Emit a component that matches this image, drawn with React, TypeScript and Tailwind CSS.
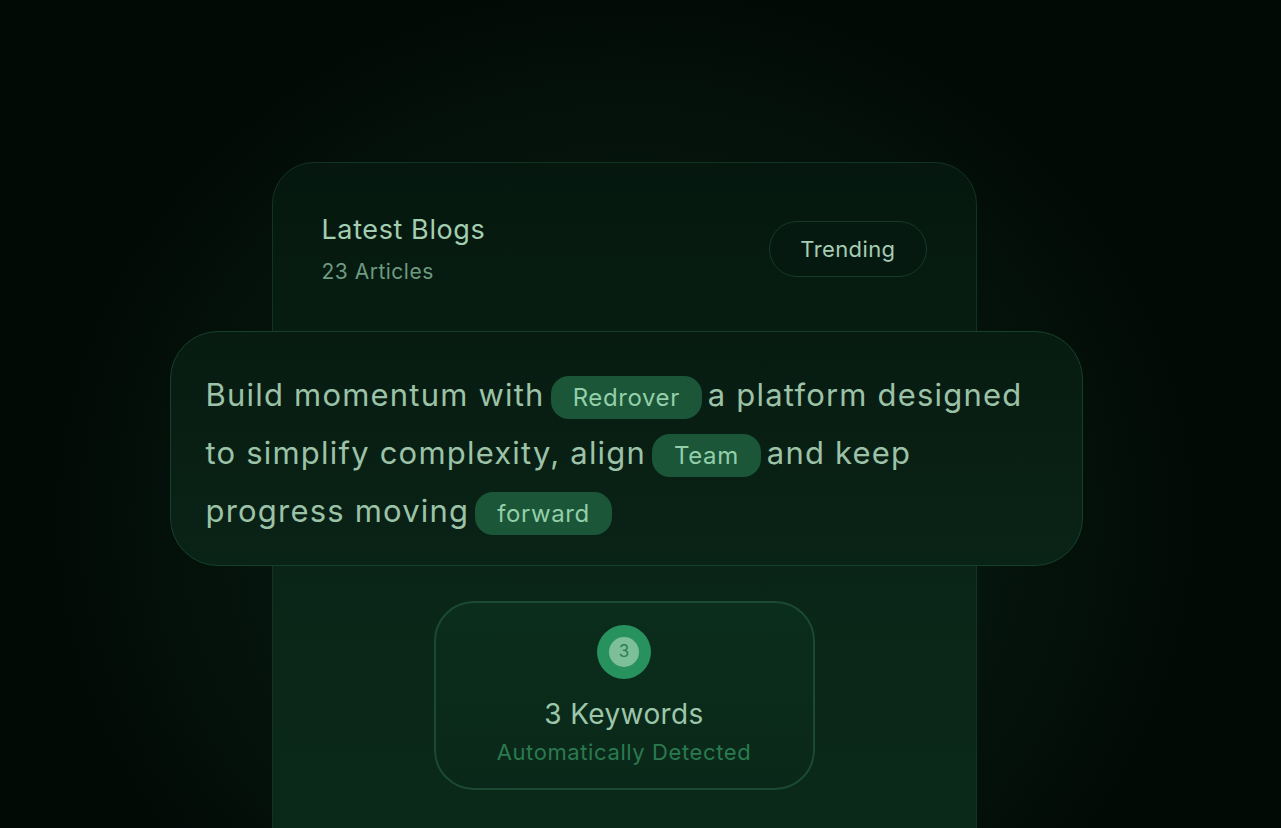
const Chip = ({ label }: { label: string }) => (
  <span className="mx-[6px] inline-flex h-[43px] items-center rounded-[18px] bg-[#1b5638] px-[22px] align-middle text-[24px] leading-none tracking-[0.6px] text-[#93cfa9]">
    {label}
  </span>
);

const App = () => {
  return (
    <div
      className="flex h-[828px] w-full justify-center overflow-hidden bg-[radial-gradient(ellipse_580px_540px_at_625px_520px,#0c2c1c_0%,#06170f_55%,#020a06_100%)] pr-[33px] pt-[162px]"
      style={{ fontFamily: 'Inter, "Noto Sans", sans-serif' }}
    >
      <div className="flex h-[720px] w-[705px] shrink-0 flex-col rounded-t-[42px] border border-[#123322] bg-[linear-gradient(180deg,#05170e_0%,#0a2618_60%,#0b2a1a_100%)]">
        <div className="flex items-start justify-between pl-[49px] pr-[49px] pt-[50px]">
          <div className="flex flex-col">
            <span className="text-[27px] leading-[34px] tracking-[0.6px] text-[#a3ceb1]">
              Latest Blogs
            </span>
            <span className="mt-[12px] text-[21px] leading-[26px] tracking-[0.5px] text-[#6e9a80]">
              23 Articles
            </span>
          </div>
          <div className="mt-[8px] flex h-[56px] items-center rounded-full border border-[#173a28] bg-[#061910] px-[30px] text-[22px] tracking-[0.4px] text-[#a7ccb4]">
            Trending
          </div>
        </div>

        <div className="ml-[-103px] mr-[-107px] mt-[46px] rounded-[48px] border border-[#15402b] bg-[linear-gradient(180deg,#071b11_0%,#0a2317_100%)] px-[35px] pb-[25px] pt-[34px]">
          <p className="text-[31px] leading-[58px] tracking-[1.2px] text-[#9cc2a7]">
            Build momentum with
            <Chip label="Redrover" />
            a platform designed
            <br />
            to simplify complexity, align
            <Chip label="Team" />
            and keep
            <br />
            progress moving
            <Chip label="forward" />
          </p>
        </div>

        <div className="mx-auto mt-[35px] flex w-[381px] flex-col items-center rounded-[40px] border-2 border-[#1b4a31] bg-[linear-gradient(180deg,#0b2d1c_0%,#0a2819_100%)] pb-[23px] pt-[22px]">
          <div className="flex h-[54px] w-[54px] items-center justify-center rounded-full bg-[#28925f]">
            <div className="flex h-[30px] w-[30px] items-center justify-center rounded-full bg-[#7cbf99] text-[17px] text-[#2d7e52]">
              3
            </div>
          </div>
          <span className="mt-[18px] text-[28px] leading-[34px] tracking-[0.4px] text-[#9cc7aa]">
            3 Keywords
          </span>
          <span className="mt-[8px] text-[22px] leading-[26px] tracking-[0.6px] text-[#2b7a4f]">
            Automatically Detected
          </span>
        </div>
      </div>
    </div>
  );
};

export default App;
